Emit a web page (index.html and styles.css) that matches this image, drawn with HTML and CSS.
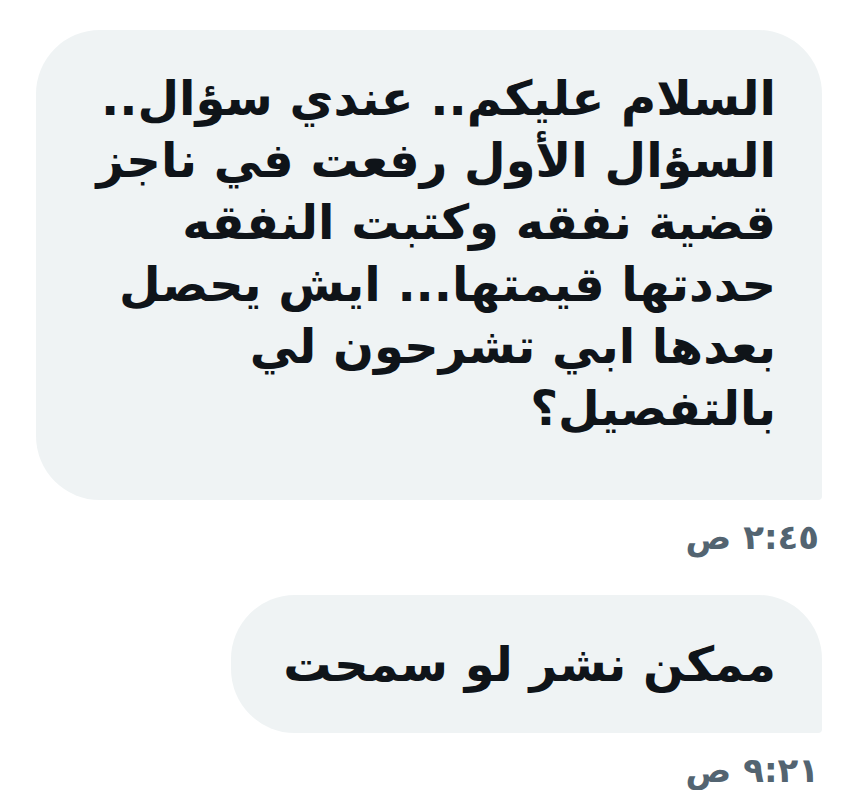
FILE: index.html
```html
<!DOCTYPE html>
<html lang="ar" dir="rtl">
<head>
    <meta charset="UTF-8">
    <meta name="viewport" content="width=device-width, initial-scale=1.0">
    <title>Messages</title>
    <link rel="stylesheet" href="styles.css">
</head>
<body>
    <div class="thread">
        <div class="message">
            <div class="bubble bubble-wide">
                <p>السلام عليكم.. عندي سؤال..<br>السؤال الأول رفعت في ناجز<br>قضية نفقه وكتبت النفقه<br>حددتها قيمتها... ايش يحصل<br>بعدها ابي تشرحون لي<br>بالتفصيل؟</p>
            </div>
            <div class="time">٢:٤٥ ص</div>
        </div>
        <div class="message">
            <div class="bubble">
                <p>ممكن نشر لو سمحت</p>
            </div>
            <div class="time">٩:٢١ ص</div>
        </div>
    </div>
</body>
</html>
```

FILE: styles.css
```css
body {
    margin: 0;
    background-color: #fff;
    font-family: "DejaVu Sans", sans-serif;
    color: #0f1419;
}
.thread {
    display: flex;
    flex-direction: column;
    gap: 38px;
    padding: 30px 27px 0 0;
}
.message {
    display: flex;
    flex-direction: column;
    align-items: flex-start;
}
.bubble {
    background-color: #eff3f4;
    border-radius: 64px 64px 4px 64px;
    padding: 38px 46px 38px 52px;
}
.bubble-wide {
    width: 690px;
    padding-top: 37px;
    padding-bottom: 61px;
    padding-left: 50px;
}
.bubble p {
    margin: 0;
    font-size: 48px;
    font-weight: bold;
    line-height: 62px;
}
.time {
    margin-top: 17px;
    padding-right: 3px;
    font-size: 34px;
    line-height: 40px;
    font-weight: bold;
    color: #536471;
}
```
